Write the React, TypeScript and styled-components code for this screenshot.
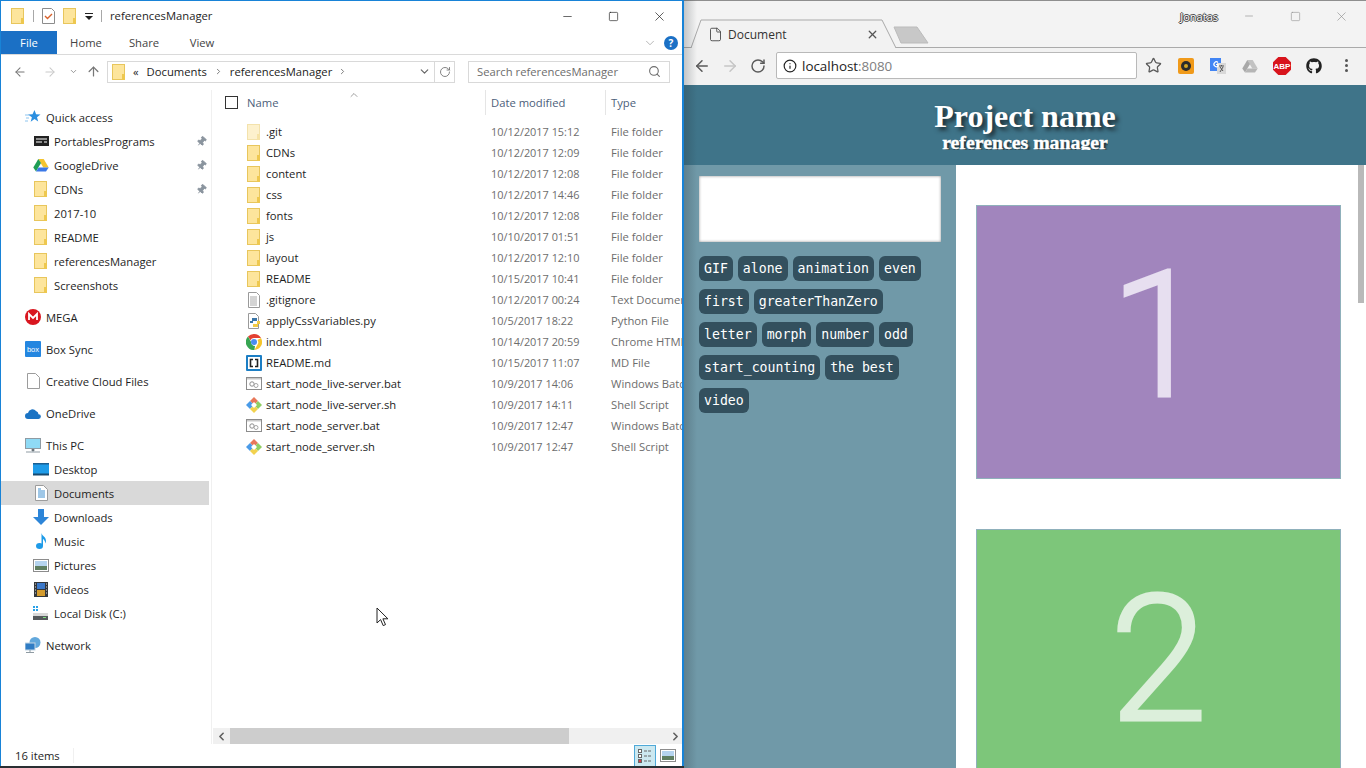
import React from 'react';
import styled, { createGlobalStyle } from 'styled-components';
import { ArrowLeft, ArrowRight, ArrowUp, ChevronDown, ChevronLeft, ChevronRight, ChevronUp, Info, Minus, RotateCw, Search, Square, Star, X, Pin, File } from 'lucide-react';
import { FaGithub } from 'react-icons/fa';

const GlobalStyle = createGlobalStyle`
  html, body {
    margin: 0;
    padding: 0;
    width: 1366px;
    height: 768px;
    overflow: hidden;
    background: #2a2f33;
  }
  * {
    box-sizing: border-box;
  }
`;

const Desktop = styled.div`
  position: relative;
  display: flex;
  width: 1366px;
  height: 768px;
  overflow: hidden;
`;

/* ---------- explorer window ---------- */

const Explorer = styled.div`
  display: flex;
  flex-direction: column;
  flex: none;
  border-top: 1px solid #1883d7;
  border-right: 2px solid #1883d7;
  border-left: 1px solid #1883d7;
  background: #fff;
  width: 684px;
  height: 766px;
  color: #1e1e1e;
  font-family: 'Open Sans', 'Noto Sans', sans-serif;
  font-size: 11.25px;
`;

const TitleBar = styled.div`
  display: flex;
  flex: none;
  align-items: center;
  padding-left: 10px;
  height: 30px;
`;

const QuickTools = styled.div`
  display: flex;
  align-items: center;
  gap: 8px;
  width: 99px;
`;

const ToolDivider = styled.span`
  display: block;
  background: #a8a8a8;
  width: 1px;
  height: 12px;
`;

const WindowTitle = styled.span`
  flex: 1;
  padding-bottom: 1px;
`;

const Controls = styled.div`
  display: flex;
  align-items: center;
  color: ${(p: { $muted?: boolean }) => (p.$muted ? '#8a8a8a' : '#1a1a1a')};
`;

const ControlButton = styled.div`
  display: flex;
  align-items: center;
  justify-content: center;
  width: 46px;
`;

const RibbonTabs = styled.div`
  display: flex;
  flex: none;
  align-items: center;
  border-bottom: 1px solid #dadada;
  height: 24px;
`;

const FileTab = styled.div`
  display: flex;
  align-items: center;
  justify-content: center;
  background: #1b70c5;
  width: 56px;
  height: 23px;
  color: #fff;
`;

const RibbonTab = styled.div`
  width: 58px;
  text-align: center;
  color: #444;
`;

const RibbonRight = styled.div`
  display: flex;
  flex: 1;
  align-items: center;
  justify-content: flex-end;
  gap: 7px;
  padding-right: 4px;
  color: #9a9a9a;
`;

const HelpBadge = styled.span`
  display: flex;
  align-items: center;
  justify-content: center;
  border-radius: 50%;
  background: #1b70c5;
  width: 14px;
  height: 14px;
  color: #fff;
  font-size: 10px;
  font-weight: 700;
`;

const AddressRow = styled.div`
  display: flex;
  flex: none;
  align-items: center;
  padding: 0 0 2px 11px;
  height: 35px;
`;

const NavButton = styled.div<{ $w: number; $faded?: boolean; $end?: boolean }>`
  display: flex;
  flex: none;
  align-items: center;
  justify-content: ${(p) => (p.$end ? 'flex-end' : 'center')};
  padding-right: ${(p) => (p.$end ? 2 : 0)}px;
  width: ${(p) => p.$w}px;
  color: ${(p) => (p.$faded ? '#c9c9c9' : '#777')};

  & > svg {
    flex: none;
  }
`;

const AddressBox = styled.div`
  display: flex;
  flex: none;
  align-items: center;
  margin-left: 4px;
  border: 1px solid #d9d9d9;
  padding-left: 4px;
  width: 348px;
  height: 22px;
  color: #222;
`;

const Crumb = styled.span`
  margin-left: ${(p: { $gap: number }) => p.$gap}px;
  white-space: nowrap;
`;

const CrumbMark = styled.span`
  display: flex;
  align-items: center;
  margin-left: ${(p: { $gap: number }) => p.$gap}px;
  color: #777;
`;

const AddressEnd = styled.div`
  display: flex;
  flex: 1;
  align-items: center;
  justify-content: flex-end;
  height: 100%;
  color: #666;
`;

const RefreshCell = styled.div`
  display: flex;
  align-items: center;
  justify-content: center;
  margin-left: 3px;
  border-left: 1px solid #d9d9d9;
  width: 20px;
  height: 100%;
  color: #777;
`;

const SearchBox = styled.div`
  display: flex;
  flex: none;
  align-items: center;
  justify-content: space-between;
  margin-left: 13px;
  border: 1px solid #d9d9d9;
  padding: 0 8px 0 8px;
  width: 202px;
  height: 22px;
  color: #6d6d6d;
`;

const Body = styled.div`
  display: flex;
  flex: 1;
  min-height: 0;
`;

const Sidebar = styled.div`
  flex: none;
  border-right: 1px solid #f0f0f0;
  padding-top: 15px;
  width: 211px;
`;

const SideGroup = styled.div`
  margin-bottom: 8px;
`;

const SideRow = styled.div`
  display: flex;
  align-items: center;
  background: ${(p: { $sub?: boolean; $on?: boolean }) => (p.$on ? '#d9d9d9' : 'transparent')};
  padding-left: ${(p: { $sub?: boolean; $on?: boolean }) => (p.$sub ? 32 : 24)}px;
  width: 208px;
  height: 24px;
  white-space: nowrap;
`;

const SideIcon = styled.span`
  display: flex;
  flex: none;
  align-items: center;
  justify-content: center;
  margin-right: 5px;
  width: 16px;
  height: 16px;
`;

const SideLabel = styled.span`
  flex: 1;
`;

const PinSlot = styled.span`
  display: flex;
  margin-right: 2px;
  transform: rotate(40deg);
  color: #8a949e;
`;

const FilePane = styled.div`
  display: flex;
  flex: 1;
  flex-direction: column;
  min-width: 0;
  overflow: hidden;
`;

const ColumnHeader = styled.div`
  display: flex;
  flex: none;
  align-items: stretch;
  padding-bottom: 1px;
  height: 26px;
  color: #4c607a;
`;

const CheckCell = styled.div`
  display: flex;
  flex: none;
  align-items: center;
  padding-left: 13px;
  width: 35px;
`;

const CheckBox = styled.span`
  display: block;
  border: 1px solid #333;
  width: 13px;
  height: 13px;
`;

const NameHead = styled.div`
  display: flex;
  flex: none;
  align-items: center;
  justify-content: space-between;
  width: 238px;
`;

const SortCaret = styled.span`
  display: flex;
  align-self: flex-start;
  margin-top: -1px;
  margin-right: 125px;
  color: #777;
`;

const DateHead = styled.div`
  display: flex;
  flex: none;
  align-items: center;
  border-left: 1px solid #e5e5e5;
  padding-left: 5px;
  width: 120px;
`;

const TypeHead = styled(DateHead)`
  flex: 1;
`;

const FileList = styled.div`
  flex: 1;
  padding-top: 5px;
`;

const FileRow = styled.div`
  display: flex;
  align-items: center;
  padding-left: 34px;
  height: 21px;
  white-space: nowrap;
`;

const FileIcon = styled.span`
  display: flex;
  flex: none;
  align-items: center;
  justify-content: center;
  margin-right: 4px;
  width: 16px;
  height: 16px;
  opacity: ${(p: { $faded?: boolean }) => (p.$faded ? 0.5 : 1)};
`;

const FileName = styled.span`
  flex: none;
  width: 225px;
`;

const FileDate = styled.span`
  flex: none;
  width: 120px;
  color: #6d6d6d;
  font-size: 10.9px;
`;

const FileType = styled.span`
  flex: none;
  color: #6d6d6d;
`;

const HScroll = styled.div`
  display: flex;
  flex: none;
  align-items: center;
  justify-content: space-between;
  margin-left: 1px;
  background: #f0f0f0;
  padding-left: 2px;
  height: 16px;
  color: #606060;
`;

const HThumb = styled.div`
  margin-left: 2px;
  background: #cdcdcd;
  width: 339px;
  height: 16px;
`;

const HTrack = styled.div`
  display: flex;
  flex: 1;
  align-items: center;
`;

const StatusBar = styled.div`
  display: flex;
  flex: none;
  align-items: center;
  justify-content: space-between;
  margin-top: 1px;
  padding: 0 3px 0 14px;
  height: 21px;
`;

const StatusViews = styled.div`
  display: flex;
  align-items: center;
  height: 100%;
`;

const ViewButton = styled.div`
  display: flex;
  align-items: center;
  justify-content: center;
  border: ${(p: { $on?: boolean }) => (p.$on ? '1px solid #4fa9d8' : '1px solid transparent')};
  border-bottom: 0;
  background: ${(p: { $on?: boolean }) => (p.$on ? '#cbe8f0' : 'transparent')};
  width: 22px;
  height: 100%;
`;

const StatusEnd = styled.div`
  display: flex;
  justify-content: center;
  width: 23px;
`;

const StatusLabel = styled.span`
  border-right: 1px solid #f0f0f0;
  padding-right: 13px;
`;

/* ---------- chrome window ---------- */

const Browser = styled.div`
  position: relative;
  display: flex;
  flex: 1;
  flex-direction: column;
  height: 768px;
  overflow: hidden;

  &::before {
    position: absolute;
    top: 0;
    bottom: 0;
    left: 0;
    z-index: 3;
    background: linear-gradient(90deg, rgba(30, 40, 45, 0.22), rgba(30, 40, 45, 0));
    width: 13px;
    content: '';
    pointer-events: none;
  }
`;

const TabStrip = styled.div`
  display: flex;
  flex: none;
  align-items: flex-start;
  border-top: 1px solid #8e8e8e;
  border-bottom: 1px solid #aaa;
  background: #f3f3f3;
  padding-left: 6px;
  height: 48px;
`;

const Tab = styled.div`
  position: relative;
  display: flex;
  flex: none;
  align-items: center;
  margin-top: 18px;
  padding: 1px 0 0 18px;
  width: 206px;
  height: 29px;
  color: #333;
  font-family: 'Open Sans', 'Noto Sans', sans-serif;
  font-size: 12px;
`;

const TabShape = styled.svg`
  position: absolute;
  top: 0;
  left: 0;
  width: 206px;
  height: 29px;
`;

const TabLabel = styled.span`
  position: relative;
  flex: 1;
  margin-left: 5px;
`;

const TabIcon = styled.span`
  position: relative;
  display: flex;
  color: #444;
`;

const TabClose = styled.span`
  position: relative;
  display: flex;
  margin-right: 17px;
  color: #555;
`;

const NewTab = styled.svg`
  flex: none;
  margin-top: 25px;
  margin-left: -3px;
  width: 36px;
  height: 18px;
`;

const StripRight = styled.div`
  display: flex;
  flex: 1;
  align-items: center;
  justify-content: flex-end;
  padding-right: 2px;
  height: 30px;
`;

const UserName = styled.span`
  margin-right: 8px;
  color: #fff;
  font-family: 'Open Sans', 'Noto Sans', sans-serif;
  font-size: 11px;
  text-shadow: 1px 0 0 #444, -1px 0 0 #444, 0 1px 0 #444, 0 -1px 0 #444;
`;

const Toolbar = styled.div`
  display: flex;
  flex: none;
  align-items: center;
  background: #f2f2f2;
  padding: 0 0 2px 4px;
  height: 37px;
`;

const ToolButton = styled.div`
  display: flex;
  flex: none;
  align-items: center;
  justify-content: center;
  width: ${(p: { $w?: number; $faded?: boolean }) => p.$w ?? 28}px;
  color: ${(p: { $w?: number; $faded?: boolean }) => (p.$faded ? '#c6c6c6' : '#5a5a5a')};
`;

const UrlBox = styled.div`
  display: flex;
  flex: none;
  align-items: center;
  gap: 5px;
  margin-left: 4px;
  border: 1px solid #b9b9b9;
  border-radius: 2px;
  background: #fff;
  padding-left: 6px;
  width: 361px;
  height: 27px;
  color: #222;
  font-family: 'Open Sans', 'Noto Sans', sans-serif;
  font-size: 13.4px;
`;

const UrlPort = styled.span`
  color: #808080;
`;

const ExtButton = styled.div`
  display: flex;
  flex: none;
  align-items: center;
  justify-content: center;
  width: 32px;
  color: #5a5a5a;
`;

const MenuDots = styled.div`
  display: flex;
  flex-direction: column;
  gap: 2px;
`;

const Dot = styled.span`
  display: block;
  border-radius: 50%;
  background: #555;
  width: 3px;
  height: 3px;
`;

const Header = styled.header`
  display: flex;
  flex: none;
  flex-direction: column;
  align-items: center;
  background: #3f7489;
  padding-top: 14px;
  height: 80px;
  color: #fff;
  font-family: 'Liberation Serif', serif;
  font-weight: 700;
`;

const ProjectName = styled.div`
  line-height: 34px;
  font-size: 32px;
  text-shadow: 3px 3px 4px #1c2a30;
`;

const SubTitle = styled.div`
  height: 17px;
  overflow: hidden;
  line-height: 18px;
  font-size: 19.8px;
  text-shadow: 2px 2px 2px #1c2a30;
  -webkit-text-stroke: 0.4px #fff;
`;

const Page = styled.div`
  display: flex;
  flex: 1;
  min-height: 0;
`;

const Aside = styled.aside`
  flex: none;
  background: #7099a8;
  padding: 11px 15px 0 15px;
  width: 272px;
`;

const TextInput = styled.div`
  margin-bottom: 14px;
  box-shadow: inset 0 0 3px #8d8d8d;
  background: #fff;
  width: 242px;
  height: 66px;
`;

const TagCloud = styled.div`
  display: flex;
  flex-wrap: wrap;
  gap: 8px 5px;
`;

const Tag = styled.span`
  display: block;
  border-radius: 6px;
  background: #33505e;
  padding: 0 5px;
  height: 25px;
  line-height: 25px;
  white-space: pre;
  color: #fff;
  font-family: 'DejaVu Sans Mono', 'Liberation Mono', monospace;
  font-size: 13.2px;
`;

const Feed = styled.main`
  flex: 1;
  background: #fff;
  padding: 40px 0 0 20px;
  overflow: hidden;
`;

const Card = styled.div<{ $color: string; $ink: string }>`
  display: flex;
  align-items: center;
  justify-content: center;
  margin-bottom: 50px;
  border: 1px solid #8fb0bb;
  background: ${(p) => p.$color};
  padding-bottom: 12px;
  width: 365px;
  height: 274px;
  line-height: 1;
  color: ${(p) => p.$ink};
  font-family: 'Roboto', sans-serif;
  font-size: 176px;
  font-weight: 300;
  -webkit-text-stroke: 3px ${(p) => p.$ink};
`;

const ScrollRail = styled.div`
  flex: none;
  background: #fff;
  padding-left: 2px;
  width: 10px;
`;

const ScrollThumb = styled.div`
  background: #b9b9b9;
  width: 6px;
  height: 138px;
`;

const Cursor = styled.svg`
  position: absolute;
  top: 607px;
  left: 376px;
  z-index: 5;
  width: 13px;
  height: 21px;
`;

/* ---------- drawings ---------- */

const FolderIcon = () => (
  <svg width='14' height='16' viewBox='0 0 14 16'>
    <rect x='0.5' y='0.5' width='12' height='15' fill='#fde59c' stroke='#e8c65c' />
    <rect x='10' y='10' width='3' height='6' fill='#eec84f' />
  </svg>
);

const DocLines = () => (
  <svg width='14' height='16' viewBox='0 0 14 16'>
    <path d='M1.5.5h8l3 3v12h-11z' fill='#fff' stroke='#9a9a9a' />
    <path d='M3 5h7M3 7h7M3 9h7M3 11h7M3 13h7' stroke='#a8a8a8' />
  </svg>
);

const QuickStar = () => (
  <svg width='16' height='16' viewBox='0 0 16 16'>
    <path d='M9.5 1l1.6 4.2 4.4.2-3.5 2.8 1.2 4.3-3.7-2.4-3.8 2.6 1.2-4.4L3 5.5l4.5-.2z' fill='#2b8fe0' />
    <path d='M0 6h4M1 9h3M0 12h3' stroke='#8ec5ef' />
  </svg>
);

const DriveTape = () => (
  <svg width='15' height='14' viewBox='0 0 15 14'>
    <rect x='0' y='2' width='15' height='10' fill='#222' />
    <path d='M2 5h11M2 8h6M10 8h3' stroke='#fff' />
  </svg>
);

const GDrive = ({ mono }: { mono?: boolean }) => (
  <svg width='16' height='14' viewBox='0 0 16 14'>
    <path d='M5.3 1h5.4l5 8.5h-5.4z' fill={mono ? '#c2c2c2' : '#f4c430'} />
    <path d='M5.3 1L.3 9.5 3 13.6l5-8.6z' fill={mono ? '#a8a8a8' : '#1f9d55'} />
    <path d='M3 13.6h10l2.7-4.1H5.6z' fill={mono ? '#b5b5b5' : '#3b78e7'} />
  </svg>
);

const MegaIcon = () => (
  <svg width='16' height='16' viewBox='0 0 16 16'>
    <circle cx='8' cy='8' r='8' fill='#d9161f' />
    <path d='M4 11V5l4 4 4-4v6' fill='none' stroke='#fff' strokeWidth='1.8' />
  </svg>
);

const BoxIcon = () => (
  <svg width='16' height='16' viewBox='0 0 16 16'>
    <rect width='16' height='16' rx='1' fill='#2486e0' />
    <text x='8' y='11' fill='#fff' fontFamily='Liberation Sans, sans-serif' fontSize='7.5' textAnchor='middle'>
      box
    </text>
  </svg>
);

const PlainPage = () => (
  <svg width='13' height='16' viewBox='0 0 13 16'>
    <path d='M.5.5h8l4 4v11H.5z' fill='#fff' stroke='#9c9c9c' />
  </svg>
);

const CloudIcon = () => (
  <svg width='16' height='11' viewBox='0 0 16 11'>
    <path d='M3 11a3 3 0 0 1 0-6 4.5 4.5 0 0 1 8-2 3.5 3.5 0 0 1 2.5 3.2A2.4 2.4 0 0 1 13.5 11z' fill='#1a73c4' />
  </svg>
);

const MonitorIcon = () => (
  <svg width='16' height='15' viewBox='0 0 16 15'>
    <rect x='0.5' y='0.5' width='15' height='10' fill='#8fdaf5' stroke='#8f9ba3' />
    <path d='M7 11h2v2H7zM1 14h14' stroke='#8f9ba3' />
  </svg>
);

const DesktopIcon = () => (
  <svg width='16' height='13' viewBox='0 0 16 13'>
    <rect width='16' height='12' fill='#1e9be8' />
    <rect y='0' width='16' height='1.5' fill='#1a5f92' />
    <rect y='10.5' width='16' height='2' fill='#174a70' />
  </svg>
);

const DocumentsIcon = () => (
  <svg width='13' height='16' viewBox='0 0 13 16'>
    <path d='M.5.5h8l4 4v11H.5z' fill='#fff' stroke='#9c9c9c' />
    <path d='M3 6h7M3 8h7M3 10h7M3 12h7M3 4h3' stroke='#3f8fcf' />
  </svg>
);

const DownloadsIcon = () => (
  <svg width='16' height='16' viewBox='0 0 16 16'>
    <path d='M5 0h6v8h5l-8 8-8-8h5z' fill='#2d85d8' />
  </svg>
);

const MusicIcon = () => (
  <svg width='11' height='16' viewBox='0 0 11 16'>
    <ellipse cx='3.5' cy='13' rx='3.5' ry='3' fill='#1e9be8' />
    <path d='M5.5 13V0c.5 3 4.5 3.5 4.5 8 0 1-.4 1.7-.8 2.4.2-3-2-4.2-2.2-4.4V13z' fill='#1e9be8' />
  </svg>
);

const PicturesIcon = () => (
  <svg width='16' height='13' viewBox='0 0 16 13'>
    <rect x='0.5' y='0.5' width='15' height='12' fill='#fff' stroke='#8c8c8c' />
    <rect x='2' y='2' width='12' height='5' fill='#b5d4ef' />
    <path d='M2 7h12v4H2z' fill='#5f7f62' />
  </svg>
);

const VideosIcon = () => (
  <svg width='14' height='15' viewBox='0 0 14 15'>
    <rect width='14' height='15' fill='#33373b' />
    <rect x='3' y='1' width='8' height='6' fill='#3b78c9' />
    <rect x='3' y='8' width='8' height='6' fill='#d39b2d' />
    <path d='M1 2h1M1 5h1M1 8h1M1 11h1M12 2h1M12 5h1M12 8h1M12 11h1' stroke='#ddd' />
  </svg>
);

const DiskIcon = () => (
  <svg width='16' height='16' viewBox='0 0 16 16'>
    <path d='M0 1h2v2H0zM3 1h2v2H3zM0 4h2v2H0zM3 4h2v2H3z' fill='#29a1e8' />
    <rect x='0' y='8' width='15' height='3' fill='#d8d8d8' />
    <rect x='0' y='11' width='15' height='4' fill='#55595c' />
    <rect x='10' y='12' width='3' height='1' fill='#7be07b' />
  </svg>
);

const NetworkIcon = () => (
  <svg width='16' height='16' viewBox='0 0 16 16'>
    <circle cx='10' cy='5.5' r='5.5' fill='#62a8dc' />
    <rect x='0' y='6' width='10' height='7' fill='#2f7cc4' stroke='#c4d6e4' />
    <path d='M5 13v2M1 15.5h8' stroke='#8f9ba3' />
  </svg>
);

const PythonPage = () => (
  <svg width='15' height='16' viewBox='0 0 15 16'>
    <path d='M1.5.5h7l3 3v12h-10z' fill='#fff' stroke='#9a9a9a' />
    <path d='M5 8V5h5v3H6v2H3V8z' fill='#3b75a8' />
    <path d='M10 8h3v3h-2v3H6v-3h4z' fill='#f2cb45' />
  </svg>
);

const ChromeIcon = () => (
  <svg width='16' height='16' viewBox='0 0 16 16'>
    <path d='M8 0a8 8 0 0 1 7 4H8a4 4 0 0 0-3.6 2.2L2 2.6A8 8 0 0 1 8 0z' fill='#e34133' />
    <path d='M15 4a8 8 0 0 1-6.6 12l3-5.2A4 4 0 0 0 11.5 6z' fill='#f6c52c' />
    <path d='M8.4 16A8 8 0 0 1 2 2.6l3 5.2a4 4 0 0 0 4 4.2z' fill='#37a552' />
    <circle cx='8' cy='8' r='3' fill='#4a8df0' />
  </svg>
);

const BracketsIcon = () => (
  <svg width='16' height='16' viewBox='0 0 16 16'>
    <rect width='16' height='16' rx='1' fill='#1c7ec4' />
    <rect x='2' y='2' width='12' height='12' fill='#fff' />
    <path d='M7 4.5H4.5v7H7M9 4.5h2.5v7H9' fill='none' stroke='#222' strokeWidth='1.6' />
  </svg>
);

const BatIcon = () => (
  <svg width='16' height='13' viewBox='0 0 16 13'>
    <rect x='0.5' y='0.5' width='15' height='12' fill='#fff' stroke='#8c8c8c' />
    <rect x='1' y='1' width='14' height='1.5' fill='#c9c9c9' />
    <circle cx='6' cy='7' r='2.2' fill='none' stroke='#8c8c8c' />
    <circle cx='10' cy='8.5' r='2' fill='none' stroke='#a5a5a5' />
  </svg>
);

const GitBashIcon = () => (
  <svg width='16' height='16' viewBox='0 0 16 16'>
    <path d='M8 0l4 4-4 4-4-4z' fill='#e8785a' />
    <path d='M12 4l4 4-4 4-4-4z' fill='#8fce63' />
    <path d='M4 4l4 4-4 4-4-4z' fill='#4a9be8' />
    <path d='M8 8l4 4-4 4-4-4z' fill='#f2d24e' />
    <path d='M8 5l3 3-3 3-3-3z' fill='#fff' />
  </svg>
);

const TaskIcon = () => (
  <svg width='13' height='16' viewBox='0 0 13 16'>
    <path d='M.5.5h9l3 3v12H.5z' fill='#fff' stroke='#8c8c8c' />
    <path d='M3 8l2.5 2.5L10 6' fill='none' stroke='#d8622c' strokeWidth='1.4' />
  </svg>
);

const DropMark = () => (
  <svg width='8' height='7' viewBox='0 0 8 7'>
    <path d='M0 0h8v1H0zM0 3h8L4 7z' fill='#222' />
  </svg>
);

const DetailsView = () => (
  <svg width='14' height='18' viewBox='0 0 14 18'>
    <rect x='0.5' y='2.5' width='3' height='3' fill='#fff' stroke='#666' />
    <rect x='0.5' y='7.5' width='3' height='3' fill='#fff' stroke='#666' />
    <rect x='0.5' y='12.5' width='3' height='3' fill='#d8404a' stroke='#666' />
    <path d='M6 4h8M6 9h8M6 14h8' stroke='#666' strokeDasharray='3 1' />
  </svg>
);

const OrangeExt = () => (
  <svg width='16' height='16' viewBox='0 0 16 16'>
    <rect width='16' height='16' rx='2' fill='#f09a1a' />
    <circle cx='8' cy='8' r='5' fill='#2b2b2b' />
    <circle cx='8' cy='8' r='2' fill='#d3a524' />
  </svg>
);

const TranslateExt = () => (
  <svg width='16' height='16' viewBox='0 0 16 16'>
    <rect x='0' y='0' width='11' height='13' fill='#4285f4' />
    <rect x='7' y='5' width='9' height='11' fill='#d8d8d8' />
    <path d='M8 4.5A2.4 2.4 0 1 0 8 8V6.5H6' fill='none' stroke='#fff' strokeWidth='1.2' />
    <path d='M9 8h5M11.5 7v1M10 14l3-5M10 9l3 4' stroke='#555' />
  </svg>
);

const AbpExt = () => (
  <svg width='18' height='18' viewBox='0 0 18 18'>
    <path d='M5.3 0h7.4L18 5.3v7.4L12.7 18H5.3L0 12.7V5.3z' fill='#d8141c' />
    <text x='9' y='12' fill='#fff' fontFamily='Liberation Sans, sans-serif' fontSize='8' fontWeight='700' textAnchor='middle'>
      ABP
    </text>
  </svg>
);

const sideGroups = [
  [
    { label: 'Quick access', icon: <QuickStar /> },
    { label: 'PortablesPrograms', icon: <DriveTape />, sub: true, pin: true },
    { label: 'GoogleDrive', icon: <GDrive />, sub: true, pin: true },
    { label: 'CDNs', icon: <FolderIcon />, sub: true, pin: true },
    { label: '2017-10', icon: <FolderIcon />, sub: true },
    { label: 'README', icon: <FolderIcon />, sub: true },
    { label: 'referencesManager', icon: <FolderIcon />, sub: true },
    { label: 'Screenshots', icon: <FolderIcon />, sub: true },
  ],
  [{ label: 'MEGA', icon: <MegaIcon /> }],
  [{ label: 'Box Sync', icon: <BoxIcon /> }],
  [{ label: 'Creative Cloud Files', icon: <PlainPage /> }],
  [{ label: 'OneDrive', icon: <CloudIcon /> }],
  [
    { label: 'This PC', icon: <MonitorIcon /> },
    { label: 'Desktop', icon: <DesktopIcon />, sub: true },
    { label: 'Documents', icon: <DocumentsIcon />, sub: true, on: true },
    { label: 'Downloads', icon: <DownloadsIcon />, sub: true },
    { label: 'Music', icon: <MusicIcon />, sub: true },
    { label: 'Pictures', icon: <PicturesIcon />, sub: true },
    { label: 'Videos', icon: <VideosIcon />, sub: true },
    { label: 'Local Disk (C:)', icon: <DiskIcon />, sub: true },
  ],
  [{ label: 'Network', icon: <NetworkIcon /> }],
];

const files = [
  { name: '.git', date: '10/12/2017 15:12', type: 'File folder', icon: <FolderIcon />, faded: true },
  { name: 'CDNs', date: '10/12/2017 12:09', type: 'File folder', icon: <FolderIcon /> },
  { name: 'content', date: '10/12/2017 12:08', type: 'File folder', icon: <FolderIcon /> },
  { name: 'css', date: '10/12/2017 14:46', type: 'File folder', icon: <FolderIcon /> },
  { name: 'fonts', date: '10/12/2017 12:08', type: 'File folder', icon: <FolderIcon /> },
  { name: 'js', date: '10/10/2017 01:51', type: 'File folder', icon: <FolderIcon /> },
  { name: 'layout', date: '10/12/2017 12:10', type: 'File folder', icon: <FolderIcon /> },
  { name: 'README', date: '10/15/2017 10:41', type: 'File folder', icon: <FolderIcon /> },
  { name: '.gitignore', date: '10/12/2017 00:24', type: 'Text Document', icon: <DocLines /> },
  { name: 'applyCssVariables.py', date: '10/5/2017 18:22', type: 'Python File', icon: <PythonPage /> },
  { name: 'index.html', date: '10/14/2017 20:59', type: 'Chrome HTML', icon: <ChromeIcon /> },
  { name: 'README.md', date: '10/15/2017 11:07', type: 'MD File', icon: <BracketsIcon /> },
  { name: 'start_node_live-server.bat', date: '10/9/2017 14:06', type: 'Windows Batch', icon: <BatIcon /> },
  { name: 'start_node_live-server.sh', date: '10/9/2017 14:11', type: 'Shell Script', icon: <GitBashIcon /> },
  { name: 'start_node_server.bat', date: '10/9/2017 12:47', type: 'Windows Batch', icon: <BatIcon /> },
  { name: 'start_node_server.sh', date: '10/9/2017 12:47', type: 'Shell Script', icon: <GitBashIcon /> },
];

const tags = [
  'GIF',
  'alone',
  'animation',
  'even',
  'first',
  'greaterThanZero',
  'letter',
  'morph',
  'number',
  'odd',
  'start_counting',
  'the best',
  'video',
];

export default function App() {
  return (
    <Desktop>
      <GlobalStyle />
      <Explorer>
        <TitleBar>
          <QuickTools>
            <FolderIcon />
            <ToolDivider />
            <TaskIcon />
            <FolderIcon />
            <DropMark />
            <ToolDivider />
          </QuickTools>
          <WindowTitle>referencesManager</WindowTitle>
          <Controls>
            <ControlButton>
              <Minus size={13} strokeWidth={1.2} />
            </ControlButton>
            <ControlButton>
              <Square size={11} strokeWidth={1.4} />
            </ControlButton>
            <ControlButton>
              <X size={15} strokeWidth={1.1} />
            </ControlButton>
          </Controls>
        </TitleBar>
        <RibbonTabs>
          <FileTab>File</FileTab>
          <RibbonTab>Home</RibbonTab>
          <RibbonTab>Share</RibbonTab>
          <RibbonTab>View</RibbonTab>
          <RibbonRight>
            <ChevronDown size={14} strokeWidth={1.2} />
            <HelpBadge>?</HelpBadge>
          </RibbonRight>
        </RibbonTabs>
        <AddressRow>
          <NavButton $w={16}>
            <ArrowLeft size={14} strokeWidth={1.8} />
          </NavButton>
          <NavButton $w={44} $faded>
            <ArrowRight size={14} strokeWidth={1.8} />
          </NavButton>
          <NavButton $w={2}>
            <ChevronDown size={9} strokeWidth={2} />
          </NavButton>
          <NavButton $w={29} $end>
            <ArrowUp size={15} strokeWidth={2} />
          </NavButton>
          <AddressBox>
            <FolderIcon />
            <Crumb $gap={7}>«</Crumb>
            <Crumb $gap={8}>Documents</Crumb>
            <CrumbMark $gap={7}>
              <ChevronRight size={9} strokeWidth={2.5} />
            </CrumbMark>
            <Crumb $gap={7}>referencesManager</Crumb>
            <CrumbMark $gap={6}>
              <ChevronRight size={9} strokeWidth={2.5} />
            </CrumbMark>
            <AddressEnd>
              <ChevronDown size={13} strokeWidth={2.2} />
              <RefreshCell>
                <RotateCw size={12} strokeWidth={1.8} />
              </RefreshCell>
            </AddressEnd>
          </AddressBox>
          <SearchBox>
            Search referencesManager
            <Search size={13} strokeWidth={2} />
          </SearchBox>
        </AddressRow>
        <Body>
          <Sidebar>
            {sideGroups.map((group) => (
              <SideGroup key={group[0].label}>
                {group.map((row: { label: string; icon: React.ReactNode; sub?: boolean; pin?: boolean; on?: boolean }) => (
                  <SideRow key={row.label} $sub={row.sub} $on={row.on}>
                    <SideIcon>{row.icon}</SideIcon>
                    <SideLabel>{row.label}</SideLabel>
                    {row.pin && (
                      <PinSlot>
                        <Pin size={11} fill='#8a949e' />
                      </PinSlot>
                    )}
                  </SideRow>
                ))}
              </SideGroup>
            ))}
          </Sidebar>
          <FilePane>
            <ColumnHeader>
              <CheckCell>
                <CheckBox />
              </CheckCell>
              <NameHead>
                Name
                <SortCaret>
                  <ChevronUp size={12} strokeWidth={1.4} />
                </SortCaret>
              </NameHead>
              <DateHead>Date modified</DateHead>
              <TypeHead>Type</TypeHead>
            </ColumnHeader>
            <FileList>
              {files.map((file) => (
                <FileRow key={file.name}>
                  <FileIcon $faded={file.faded}>{file.icon}</FileIcon>
                  <FileName>{file.name}</FileName>
                  <FileDate>{file.date}</FileDate>
                  <FileType>{file.type}</FileType>
                </FileRow>
              ))}
            </FileList>
            <HScroll>
              <ChevronLeft size={13} strokeWidth={3} />
              <HTrack>
                <HThumb />
              </HTrack>
              <ChevronRight size={13} strokeWidth={3} />
            </HScroll>
          </FilePane>
        </Body>
        <StatusBar>
          <StatusLabel>16 items</StatusLabel>
          <StatusViews>
            <ViewButton $on>
              <DetailsView />
            </ViewButton>
            <StatusEnd>
              <PicturesIcon />
            </StatusEnd>
          </StatusViews>
        </StatusBar>
      </Explorer>
      <Browser>
        <TabStrip>
          <Tab>
            <TabShape viewBox='0 0 206 29'>
              <path d='M1 29L11 1H192L206 29' fill='#f2f2f2' stroke='#a9a9a9' />
            </TabShape>
            <TabIcon>
              <File size={15} strokeWidth={1.4} />
            </TabIcon>
            <TabLabel>Document</TabLabel>
            <TabClose>
              <X size={13} strokeWidth={2.4} />
            </TabClose>
          </Tab>
          <NewTab viewBox='0 0 36 18'>
            <path d='M1 1H24L35 17H8z' fill='#c8c8c8' stroke='#bbb' />
          </NewTab>
          <StripRight>
            <UserName>Jonatas</UserName>
            <Controls $muted>
              <ControlButton>
                <Minus size={12} strokeWidth={1.2} />
              </ControlButton>
              <ControlButton>
                <Square size={11} strokeWidth={1.2} />
              </ControlButton>
              <ControlButton>
                <X size={15} strokeWidth={1} />
              </ControlButton>
            </Controls>
          </StripRight>
        </TabStrip>
        <Toolbar>
          <ToolButton>
            <ArrowLeft size={18} strokeWidth={2} />
          </ToolButton>
          <ToolButton $faded>
            <ArrowRight size={18} strokeWidth={2} />
          </ToolButton>
          <ToolButton>
            <RotateCw size={16} strokeWidth={2.2} />
          </ToolButton>
          <UrlBox>
            <Info size={14} strokeWidth={2} />
            <span>
              localhost<UrlPort>:8080</UrlPort>
            </span>
          </UrlBox>
          <ToolButton $w={33}>
            <Star size={17} strokeWidth={1.8} />
          </ToolButton>
          <ExtButton>
            <OrangeExt />
          </ExtButton>
          <ExtButton>
            <TranslateExt />
          </ExtButton>
          <ExtButton>
            <GDrive mono />
          </ExtButton>
          <ExtButton>
            <AbpExt />
          </ExtButton>
          <ExtButton>
            <FaGithub size={16} color='#222' />
          </ExtButton>
          <ExtButton>
            <MenuDots>
              <Dot />
              <Dot />
              <Dot />
            </MenuDots>
          </ExtButton>
        </Toolbar>
        <Header>
          <ProjectName>Project name</ProjectName>
          <SubTitle>references manager</SubTitle>
        </Header>
        <Page>
          <Aside>
            <TextInput />
            <TagCloud>
              {tags.map((tag) => (
                <Tag key={tag}>{tag}</Tag>
              ))}
            </TagCloud>
          </Aside>
          <Feed>
            <Card $color='#a185bd' $ink='#e7dff0'>1</Card>
            <Card $color='#7dc67a' $ink='#dcefdb'>2</Card>
          </Feed>
          <ScrollRail>
            <ScrollThumb />
          </ScrollRail>
        </Page>
      </Browser>
      <Cursor viewBox='0 0 13 21'>
        <path d='M1 1v15l3.6-3.4 2.6 6 2.3-1-2.6-5.8h5z' fill='#fff' stroke='#222' />
      </Cursor>
    </Desktop>
  );
}
